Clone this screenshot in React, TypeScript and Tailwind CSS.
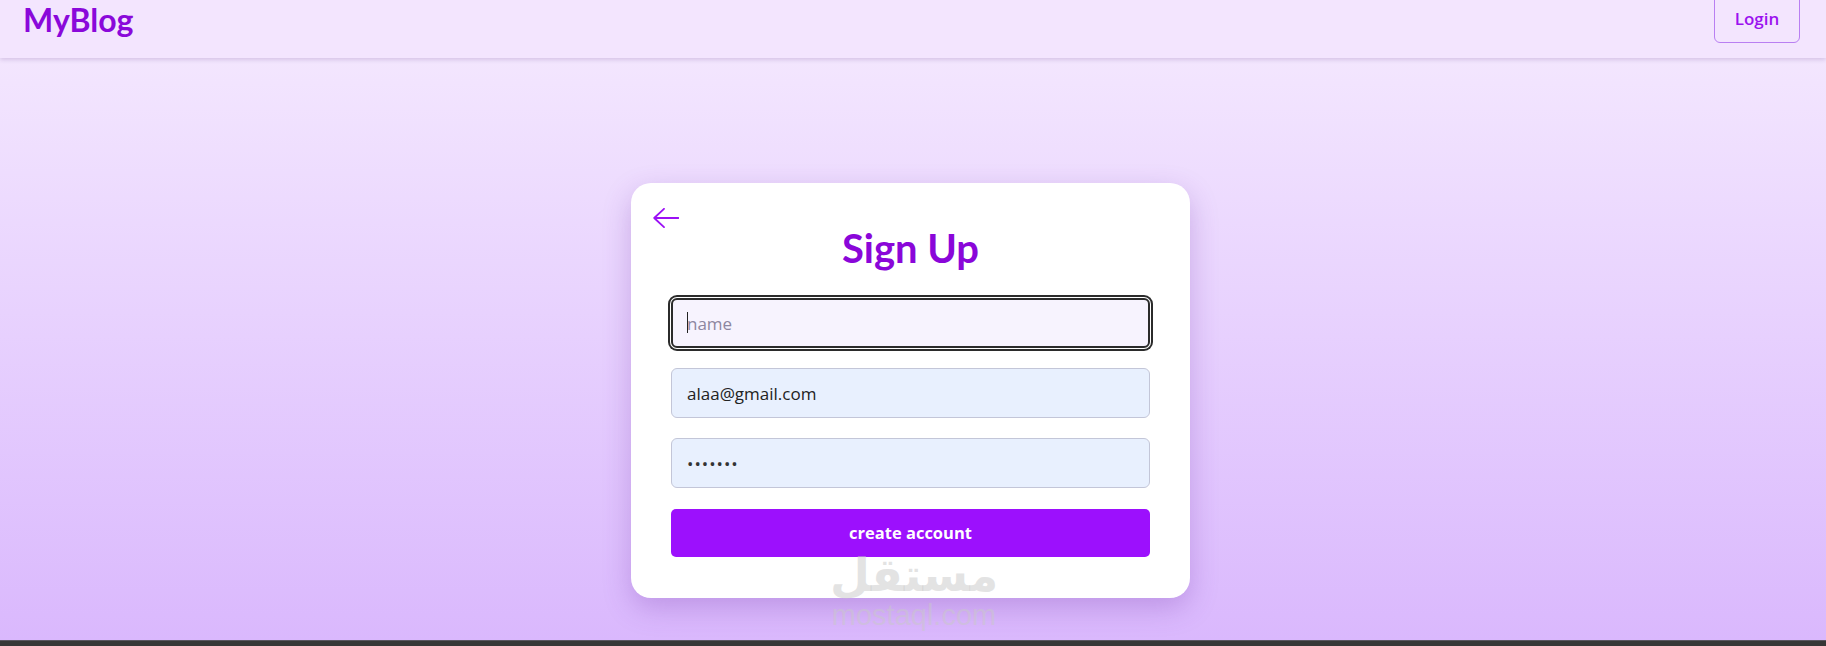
export default function App() {
  return (
    <div className="relative flex h-[646px] flex-col overflow-hidden font-['Open_Sans',sans-serif]">
      <header className="relative z-10 flex h-[58px] shrink-0 items-start justify-between bg-[#f3e5fe] pl-[23px] pr-[26px] shadow-[0_2px_4px_rgba(90,50,130,0.18)]">
        <span className="mt-[4px] font-['Lato',sans-serif] text-[32px] font-bold leading-none text-[#8a08da]">
          MyBlog
        </span>
        <button
          type="button"
          className="-mt-[8px] flex h-[51px] w-[86px] items-center justify-center rounded-[6px] border border-[#b97ff2] pt-[3px] text-[17px] font-semibold text-[#9b12ef]"
        >
          Login
        </button>
      </header>

      <main className="flex flex-1 justify-center bg-gradient-to-b from-[#f3e6fe] to-[#dab8fd] pt-[125px] pr-[5px]">
        <div className="h-fit w-[559px] rounded-[20px] bg-white px-[40px] pt-[25px] pb-[41px] shadow-[0_10px_28px_rgba(110,50,170,0.28)]">
          <div className="-ml-[18px] h-[20px]">
            <svg width="26" height="20" viewBox="0 0 26 20" fill="none">
              <path
                d="M11 0.8 L1.2 10 L11 19.2 M1.2 10 H25.5"
                stroke="#9b10f5"
                strokeWidth="1.8"
                strokeLinecap="round"
                strokeLinejoin="round"
              />
            </svg>
          </div>
          <h1 className="text-center font-['Lato',sans-serif] text-[40px] font-bold leading-none text-[#8a06d9]">
            Sign Up
          </h1>

          <form className="mt-[30px] flex flex-col gap-[20px]">
            <div className="relative">
              <input
                readOnly
                placeholder="name"
                className="h-[50px] w-full rounded-[6px] border-2 border-[#2b2b2b] bg-[#f7f3fe] px-[14px] text-[17px] text-[#222] shadow-[0_0_0_1px_#fff,0_0_0_3px_#2b2b2b] outline-none placeholder:text-[#8d86a0]"
              />
              <span className="absolute top-[14px] left-[16px] h-[21px] w-px bg-[#222]" />
            </div>
            <input
              readOnly
              value="alaa@gmail.com"
              className="h-[50px] w-full rounded-[6px] border border-[#c3c6d8] bg-[#e8f0fe] px-[15px] text-[17px] text-[#222] outline-none"
            />
            <input
              readOnly
              type="password"
              value="1234567"
              className="h-[50px] w-full rounded-[6px] border border-[#c3c6d8] bg-[#e8f0fe] px-[15px] text-[17px] tracking-[1px] text-[#333] outline-none"
            />
            <button
              type="button"
              className="mt-[1px] h-[48px] w-full rounded-[5px] bg-[#9c10fd] text-[16.5px] font-bold text-white"
            >
              create account
            </button>
          </form>
        </div>
      </main>

      <div className="h-[6px] shrink-0 border-t border-[#5a5560] bg-[#363636]" />

      <div className="pointer-events-none absolute top-[548px] left-[828px] flex w-[172px] flex-col items-center text-[rgba(200,200,200,0.5)]">
        <span dir="rtl" className="font-['DejaVu_Sans',sans-serif] text-[46px] font-bold leading-[54px]">
          مستقل
        </span>
        <span className="font-['Liberation_Sans',sans-serif] text-[29px] leading-[26px]">
          mostaql.com
        </span>
      </div>
    </div>
  );
}
